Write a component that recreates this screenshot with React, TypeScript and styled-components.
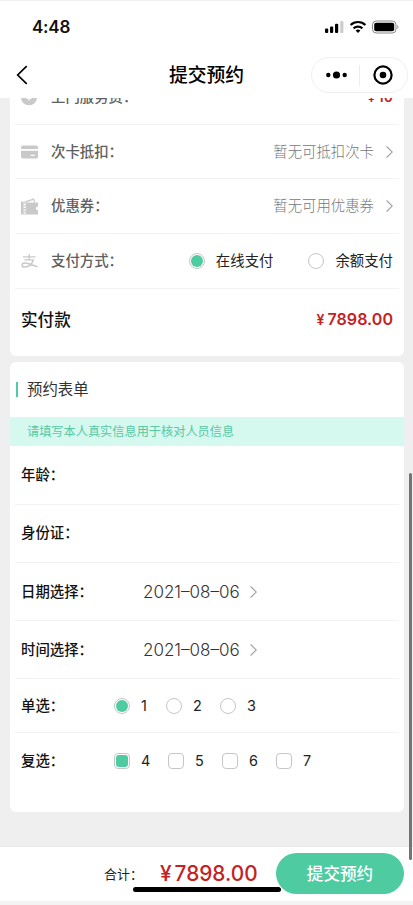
import React, { useState } from 'react';
import styled, { createGlobalStyle } from 'styled-components';

const GREEN = '#4fcba2';
const RED = '#c5221f';

const GlobalStyle = createGlobalStyle`
  * {
    box-sizing: border-box;
  }
  body {
    margin: 0;
    background: #ffffff;
    font-family: Inter, 'Noto Sans CJK SC', sans-serif;
    color: #222222;
  }
`;

const Page = styled.div`
  position: relative;
  display: flex;
  flex-direction: column;
  height: 905px;
  width: 413px;
  overflow: hidden;
  border-top: 1px solid #f1f1f1;
  border-bottom: 4px solid #f3f3f3;
`;

const StatusBar = styled.div`
  display: flex;
  align-items: center;
  justify-content: space-between;
  height: 51px;
  padding: 0 14px 0 32px;
  flex-shrink: 0;
`;

const Time = styled.span`
  font-size: 17px;
  font-weight: 600;
  color: #111111;
  letter-spacing: -0.2px;
`;

const NavBar = styled.div`
  display: grid;
  grid-template-columns: 1fr auto 1fr;
  align-items: center;
  height: 46px;
  padding: 0 5px 0 16px;
  flex-shrink: 0;
`;

const NavTitle = styled.h1`
  margin: 2px 0 0;
  padding-right: 11px;
  font-size: 18.8px;
  font-weight: 500;
  line-height: 28px;
  color: #000000;
`;

const Capsule = styled.div`
  display: flex;
  align-items: center;
  justify-content: space-between;
  justify-self: end;
  width: 97px;
  height: 36px;
  padding: 0 14px;
  border: 1px solid #efefef;
  border-radius: 18px;
`;

const CapsuleLine = styled.span`
  width: 1px;
  height: 21px;
  margin-right: 2px;
  background: #ececec;
`;

const Content = styled.div`
  display: flex;
  flex-direction: column;
  gap: 6px;
  flex: 1;
  min-height: 0;
  padding: 0 9px 0 10px;
  overflow: hidden;
  background: #efefef;
`;

const Card = styled.section<{ $height: number; $clipped?: boolean }>`
  flex-shrink: 0;
  height: ${p => p.$height}px;
  margin-top: ${p => p.$clipped ? '-28px' : '0'};
  border-radius: 6px;
  background: #ffffff;
`;

const Row = styled.div<{ $height: number; $last?: boolean }>`
  display: flex;
  align-items: center;
  height: ${p => p.$height}px;
  margin: 0 5px;
  padding: 0 6px;
  border-bottom: ${p => p.$last ? 'none' : '1px solid #f3f3f3'};
`;

const IconBox = styled.span`
  display: flex;
  width: 30px;
`;

const Label = styled.span`
  flex: 1;
  font-size: 14.4px;
  font-weight: 500;
  line-height: 22px;
  color: #606060;
`;

const Hint = styled.span`
  margin-right: 12px;
  font-size: 14.4px;
  font-weight: 300;
  line-height: 22px;
  color: #777777;
`;

const FieldLabel = styled.span<{ $width?: number }>`
  width: ${p => p.$width || 93}px;
  font-size: 14.4px;
  font-weight: 500;
  line-height: 22px;
  color: #111111;
`;

const DateValue = styled.span`
  margin-right: 10px;
  font-size: 17px;
  font-weight: 300;
  line-height: 22px;
  color: #333333;
`;

const Option = styled.label<{ $gap: number }>`
  display: flex;
  align-items: center;
  margin-left: ${p => p.$gap}px;
  cursor: pointer;
`;

const OptionText = styled.span<{ $wide?: boolean }>`
  width: ${p => p.$wide ? 'auto' : '9px'};
  margin-left: 11px;
  font-size: 14.4px;
  line-height: 22px;
  white-space: nowrap;
`;

const Mark = styled.span<{ $on: boolean; $square?: boolean }>`
  display: flex;
  align-items: center;
  justify-content: center;
  flex-shrink: 0;
  width: 16px;
  height: 16px;
  border: 1px solid #c6c6c6;
  border-radius: ${p => p.$square ? '4px' : '50%'};
  background: #ffffff;
  &::after {
    content: '';
    display: ${p => p.$on ? 'block' : 'none'};
    width: 12px;
    height: 12px;
    flex-shrink: 0;
    border-radius: ${p => p.$square ? '3px' : '50%'};
    background: ${GREEN};
  }
`;

const TotalLabel = styled.span`
  flex: 1;
  font-size: 16.6px;
  font-weight: 500;
  line-height: 24px;
  color: #111111;
`;

const Price = styled.span<{ $size: number; $weight?: number }>`
  display: flex;
  align-items: baseline;
  font-size: ${p => p.$size}px;
  font-weight: ${p => p.$weight || 600};
  line-height: 1.4;
  color: ${RED};
`;

const Yen = styled.span<{ $size: number; $gap: number }>`
  margin-right: ${p => p.$gap}px;
  font-size: ${p => p.$size}px;
`;

const FormTitle = styled.div`
  display: flex;
  align-items: center;
  height: 55px;
  padding-left: 6px;
  font-size: 15.4px;
  line-height: 24px;
  color: #333333;
  &::before {
    content: '';
    width: 2px;
    height: 15px;
    margin-right: 9px;
    background: ${GREEN};
  }
`;

const Notice = styled.div`
  height: 29px;
  padding-left: 17px;
  font-size: 12.2px;
  line-height: 29px;
  color: #58c8a5;
  background: #d5f8ef;
`;

const Footer = styled.div`
  display: flex;
  align-items: center;
  height: 55px;
  padding: 0 9px 1px 104px;
  border-top: 1px solid #e8e8e8;
  flex-shrink: 0;
`;

const SumLabel = styled.span`
  width: 56px;
  font-size: 13px;
  line-height: 20px;
`;

const Submit = styled.button`
  width: 128px;
  height: 41px;
  margin-left: auto;
  padding: 0;
  border: none;
  border-radius: 21px;
  font-family: inherit;
  font-size: 16.6px;
  font-weight: 500;
  line-height: 24px;
  color: #ffffff;
  background: ${GREEN};
  cursor: pointer;
`;

const HomeIndicator = styled.div`
  position: absolute;
  left: 133px;
  bottom: 9px;
  width: 148px;
  height: 5px;
  border-radius: 3px;
  background: #000000;
`;

const ScrollThumb = styled.div`
  position: absolute;
  top: 472px;
  right: 1px;
  width: 3px;
  height: 387px;
  border-radius: 2px;
  background: #747474;
`;

const Arrow: React.FC = () => (
  <svg width="7" height="14" viewBox="0 0 7 14" fill="none" stroke="#a0a0a0" strokeWidth="1.1">
    <path d="M.6 1.5 6.3 7 .6 12.5" />
  </svg>
);

const StatusIcons: React.FC = () => (
  <svg width="75" height="14" viewBox="0 0 75 14">
    <g fill="#000">
      <rect x="1" y="8.5" width="3.2" height="4.5" rx="1" />
      <rect x="6" y="6.5" width="3.2" height="6.5" rx="1" />
      <rect x="11" y="3.8" width="3.2" height="9.2" rx="1" />
      <rect x="16.2" y="1" width="3.2" height="12" rx="1" opacity=".2" />
      <path d="m34 13-2.4-2.5a3.6 3.6 0 0 1 4.8 0z" />
    </g>
    <g fill="none" stroke="#000" strokeWidth="2.2">
      <path d="M26.6 5a10.6 10.6 0 0 1 14.8 0M29.6 8.4a6.4 6.4 0 0 1 8.8 0" />
    </g>
    <rect x="48.5" y="1" width="23.5" height="12" rx="3.8" fill="none" stroke="#888" />
    <rect x="50.2" y="2.7" width="20" height="8.6" rx="2" />
    <path d="M73.3 5v4c1.6-.8 1.6-3.2 0-4z" fill="#999" />
  </svg>
);

const BackIcon: React.FC = () => (
  <svg width="12" height="20" viewBox="0 0 12 20" fill="none" stroke="#000" strokeWidth="1.7">
    <path d="m10.7 1.2-9 8.8 9 8.8" />
  </svg>
);

const MoneyIcon: React.FC = () => (
  <svg width="17" height="17" viewBox="0 0 17 17">
    <circle cx="8" cy="8.3" r="8" fill="#c9c9c9" />
    <path d="M5 3 8 6.5 11 3M8 6.5v5M5.5 7h5M5.5 9.5h5" fill="none" stroke="#fff" strokeWidth="1.2" />
  </svg>
);

const CardIcon: React.FC = () => (
  <svg width="17" height="14" viewBox="0 0 17 14" fill="#c9c9c9">
    <path d="M0 4V2.4Q0 .6 2 .6h13q2 0 2 1.8V4z" />
    <path fillRule="evenodd" d="M0 5.8h17v5.8q0 2-2 2H2q-2 0-2-2zm9.8 4v1.3h4V9.8z" />
  </svg>
);

const CouponIcon: React.FC = () => (
  <svg width="17" height="17" viewBox="0 0 17 17" fill="#c9c9c9">
    <path d="M0 3.6h2.6v13H0zM4.8 4.6H17v3.8c-2.8.2-2.8 3.4 0 3.6v4.6H4.8z" />
    <path d="M2.6 4.4h2.2v1.4H2.6zM2.6 7.2h2.2v1.4H2.6zM2.6 10h2.2v1.4H2.6zM2.6 12.8h2.2v1.4H2.6zM2.6 15.6h2.2v1H2.6z" />
    <path d="M3.5 3.4 13 .3 14.2 4.2h-1.3l-.7-2.3L5.6 4.2H3.5z" />
  </svg>
);

const AlipayIcon: React.FC = () => (
  <svg width="17" height="15" viewBox="0 0 17 15" fill="none" stroke="#c9c9c9" strokeWidth="1.5">
    <path d="M2 2.8h12.5M8.2 0v6M3.2 5.8h9.6" strokeWidth="1.3" />
    <path d="M12.3 6C11 9.8 7.8 13 3.8 13 .1 13 .2 9.4 3.7 9.1c3-.2 7.7 2.2 12.8 3.6" />
  </svg>
);

const App: React.FC = () => {
  const [payment, setPayment] = useState('在线支付');
  const [single, setSingle] = useState('1');
  const [multiple, setMultiple] = useState(['4']);

  const toggle = (value: string) => {
    setMultiple(multiple.includes(value) ? multiple.filter(v => v !== value) : [...multiple, value]);
  };

  return (
    <>
      <GlobalStyle />
      <Page>
        <StatusBar>
          <Time>4:48</Time>
          <StatusIcons />
        </StatusBar>
        <NavBar>
          <BackIcon />
          <NavTitle>提交预约</NavTitle>
          <Capsule>
            <svg width="21" height="8" viewBox="0 0 21 8">
              <circle cx="2.3" cy="4" r="2.2" />
              <circle cx="10.5" cy="4" r="3.6" />
              <circle cx="18.7" cy="4" r="2.2" />
            </svg>
            <CapsuleLine />
            <svg width="20" height="20" viewBox="0 0 20 20">
              <circle cx="10" cy="10" r="8.6" fill="none" stroke="#000" strokeWidth="2.2" />
              <circle cx="10" cy="10" r="3.3" />
            </svg>
          </Capsule>
        </NavBar>

        <Content>
          <Card $height={286} $clipped>
            <Row $height={55}>
              <IconBox><MoneyIcon /></IconBox>
              <Label>上门服务费：</Label>
              <Price $size={14}><Yen $size={12} $gap={3}>¥</Yen>10</Price>
            </Row>
            <Row $height={54}>
              <IconBox><CardIcon /></IconBox>
              <Label>次卡抵扣：</Label>
              <Hint>暂无可抵扣次卡</Hint>
              <Arrow />
            </Row>
            <Row $height={55}>
              <IconBox><CouponIcon /></IconBox>
              <Label>优惠券：</Label>
              <Hint>暂无可用优惠券</Hint>
              <Arrow />
            </Row>
            <Row $height={55}>
              <IconBox><AlipayIcon /></IconBox>
              <Label>支付方式：</Label>
              {['在线支付', '余额支付'].map(item => (
                <Option key={item} $gap={35} onClick={() => setPayment(item)}>
                  <Mark $on={payment === item} />
                  <OptionText $wide>{item}</OptionText>
                </Option>
              ))}
            </Row>
            <Row $height={61} $last>
              <TotalLabel>实付款</TotalLabel>
              <Price $size={16.1}><Yen $size={14} $gap={3}>¥</Yen>7898.00</Price>
            </Row>
          </Card>

          <Card $height={450}>
            <FormTitle>预约表单</FormTitle>
            <Notice>请填写本人真实信息用于核对人员信息</Notice>
            <Row $height={58.5}>
              <FieldLabel>年龄：</FieldLabel>
            </Row>
            <Row $height={58.5}>
              <FieldLabel>身份证：</FieldLabel>
            </Row>
            <Row $height={58}>
              <FieldLabel $width={122}>日期选择：</FieldLabel>
              <DateValue>2021–08–06</DateValue>
              <Arrow />
            </Row>
            <Row $height={58}>
              <FieldLabel $width={122}>时间选择：</FieldLabel>
              <DateValue>2021–08–06</DateValue>
              <Arrow />
            </Row>
            <Row $height={54}>
              <FieldLabel>单选：</FieldLabel>
              {['1', '2', '3'].map((item, i) => (
                <Option key={item} $gap={[0, 16, 18][i]} onClick={() => setSingle(item)}>
                  <Mark $on={single === item} />
                  <OptionText>{item}</OptionText>
                </Option>
              ))}
            </Row>
            <Row $height={55} $last>
              <FieldLabel>复选：</FieldLabel>
              {['4', '5', '6', '7'].map((item, i) => (
                <Option key={item} $gap={i ? 18 : 0} onClick={() => toggle(item)}>
                  <Mark $square $on={multiple.includes(item)} />
                  <OptionText>{item}</OptionText>
                </Option>
              ))}
            </Row>
          </Card>
        </Content>

        <Footer>
          <SumLabel>合计：</SumLabel>
          <Price $size={20.8} $weight={500}><Yen $size={20.8} $gap={3}>¥</Yen>7898.00</Price>
          <Submit>提交预约</Submit>
        </Footer>
        <ScrollThumb />
        <HomeIndicator />
      </Page>
    </>
  );
};

export default App;
